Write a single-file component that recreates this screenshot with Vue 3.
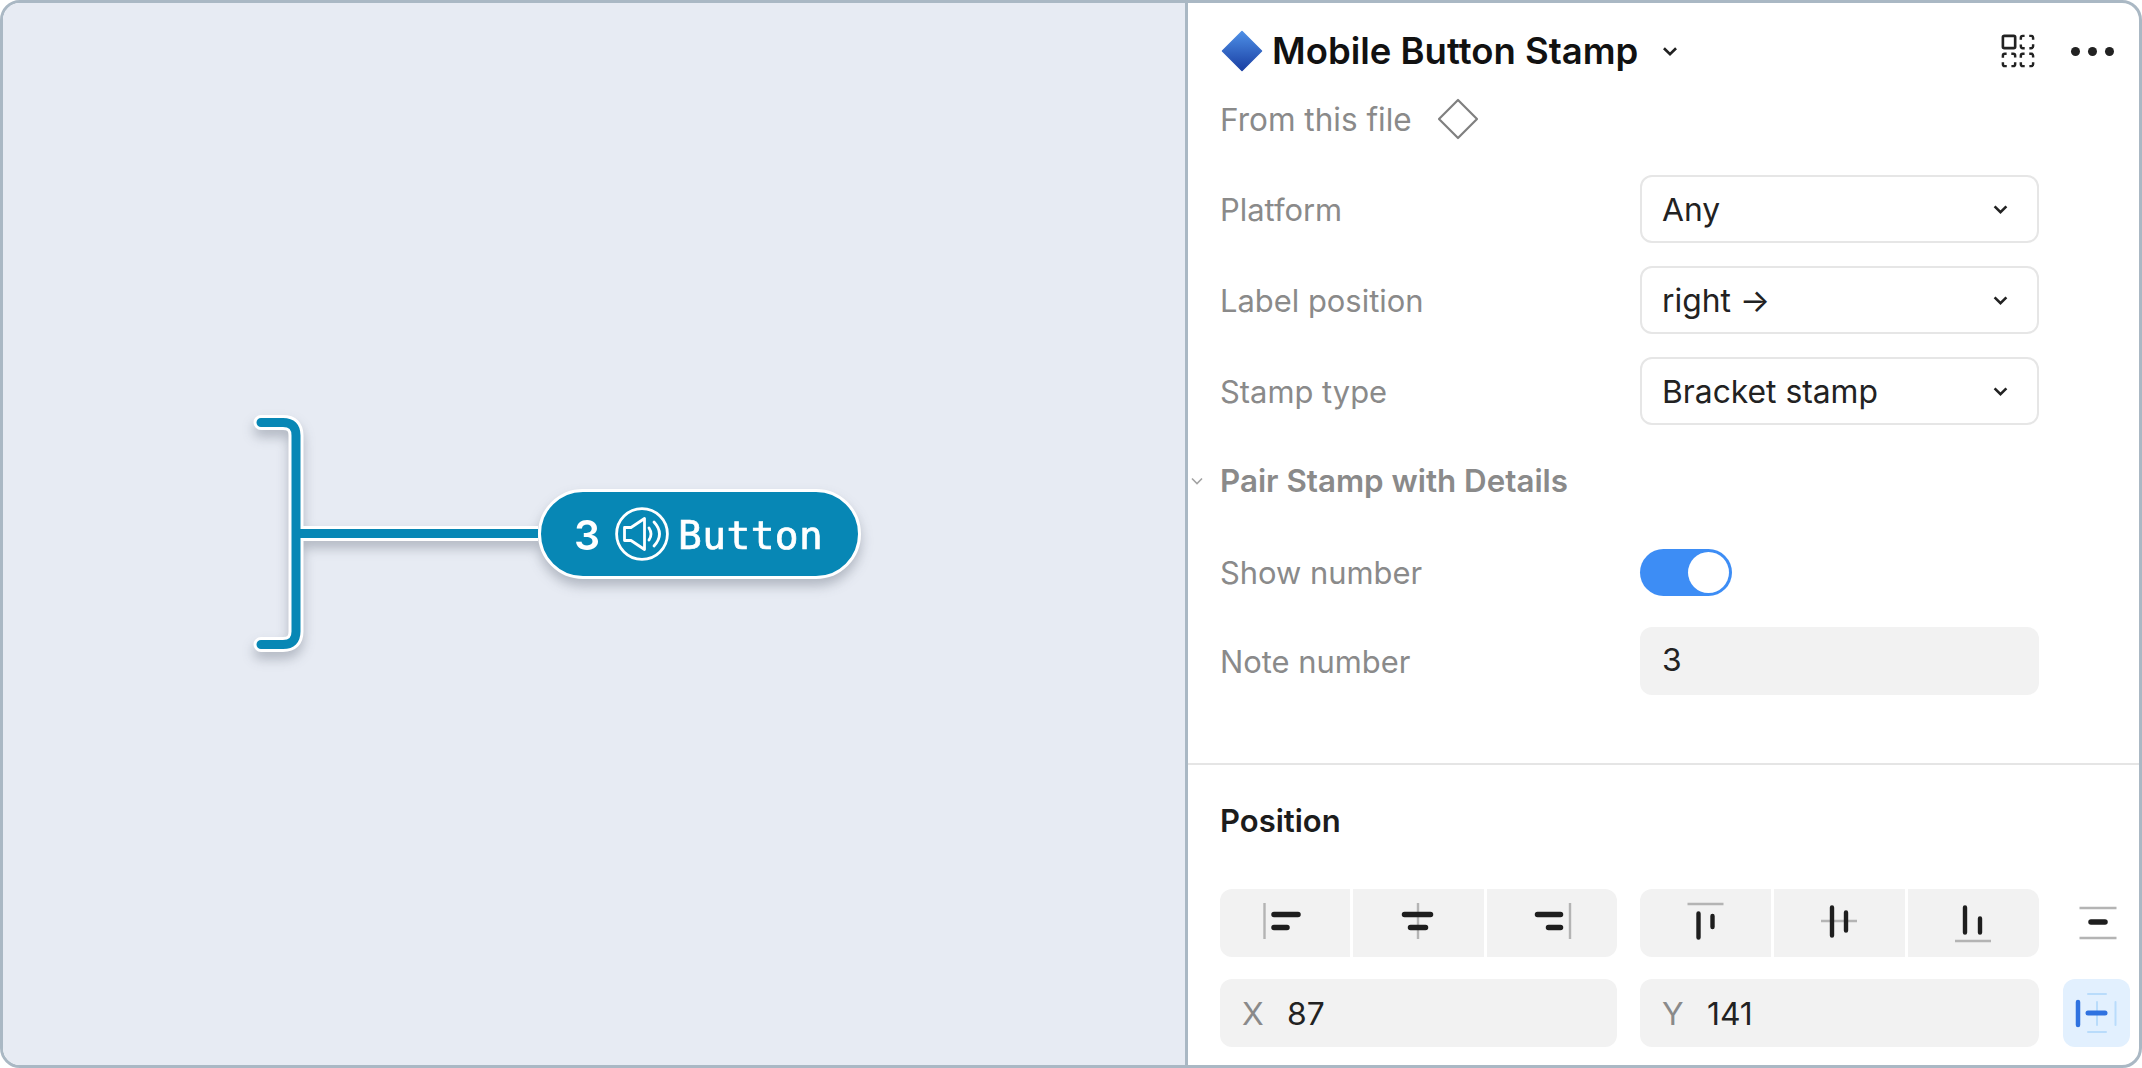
<template>
  <div class="frame">
    <div class="canvas">
      <div class="stamp">
        <svg class="bracket" width="288" height="244" viewBox="0 0 288 244" fill="none" stroke-linecap="round">
          <path class="bracket-edge" d="M11 11.5H33Q46 11.5 46 24.5V220.5Q46 233.5 33 233.5H11M46 122.5H288" />
          <path class="bracket-line" d="M11 11.5H33Q46 11.5 46 24.5V220.5Q46 233.5 33 233.5H11M46 122.5H288" />
        </svg>
        <div class="pill">
          <span class="pill-num">3</span>
          <svg class="pill-icon" width="54" height="54" viewBox="0 0 54 54" fill="none" stroke="#fff" stroke-width="2.8" stroke-linejoin="round" stroke-linecap="round">
            <circle cx="27" cy="27" r="25.4" />
            <path d="M9.5 20.5H16L29.5 11.5V42.5L16 33.5H9.5Z" />
            <path d="M34 21Q38 27 34 33" />
            <path d="M39 15Q50 27 39 39" />
          </svg>
          <span class="pill-label">Button</span>
        </div>
      </div>
    </div>

    <div class="panel">
      <div class="title-row">
        <svg class="gem" width="42" height="42" viewBox="0 0 42 42">
          <defs>
            <linearGradient id="gem-fill" x1="0" y1="0" x2="0" y2="1">
              <stop offset="0" stop-color="#4d8fe6" />
              <stop offset="1" stop-color="#1a3fa3" />
            </linearGradient>
          </defs>
          <path d="M21 1.5L40.5 21L21 40.5L1.5 21Z" fill="url(#gem-fill)" stroke="url(#gem-fill)" stroke-width="1.5" stroke-linejoin="round" />
        </svg>
        <span class="title">Mobile Button Stamp</span>
        <svg class="title-caret" width="16" height="11" viewBox="0 0 14 10" fill="none" stroke="#222" stroke-width="2.4">
          <path d="M1.5 2L7 7.5L12.5 2" />
        </svg>
        <svg class="grid-icon" width="34" height="34" viewBox="0 0 36 36" fill="none" stroke="#222">
          <rect x="2" y="2" width="13" height="13" rx="1.5" stroke-width="2.8" />
          <rect
            v-for="cell in dashedCells"
            :key="cell.id"
            :x="cell.x"
            :y="cell.y"
            width="13"
            height="13"
            rx="2"
            pathLength="48"
            stroke-width="2.6"
            stroke-dasharray="7 5"
            stroke-dashoffset="5"
          />
        </svg>
        <div class="dots"><i></i><i></i><i></i></div>
      </div>

      <div class="from-row">
        <span class="label from-label">From this file</span>
        <svg width="42" height="42" viewBox="0 0 42 42" fill="none" stroke="#7f7f7f" stroke-width="2.2" stroke-linejoin="round">
          <path d="M21 2L40 21L21 40L2 21Z" />
        </svg>
      </div>

      <div class="props">
        <div v-for="row in selects" :key="row.label" class="prop-row">
          <span class="label">{{ row.label }}</span>
          <div class="select">
            <span>{{ row.value }}</span>
            <svg width="15" height="11" viewBox="0 0 14 10" fill="none" stroke="#222" stroke-width="2.4">
              <path d="M1.5 2L7 7.5L12.5 2" />
            </svg>
          </div>
        </div>
      </div>

      <div class="sub-head">
        <svg class="sub-caret" width="14" height="10" viewBox="0 0 14 10" fill="none" stroke="#a3a3a3" stroke-width="1.6">
          <path d="M2 2.5L7 7.5L12 2.5" />
        </svg>
        <span>Pair Stamp with Details</span>
      </div>

      <div class="props props-details">
        <div class="prop-row">
          <span class="label">Show number</span>
          <div class="toggle"><i></i></div>
        </div>
        <div class="prop-row">
          <span class="label">Note number</span>
          <div class="field">3</div>
        </div>
      </div>

      <div class="divider"></div>

      <div class="pos-title">Position</div>

      <div class="tool-row">
        <div class="seg seg-left">
          <div v-for="icon in alignH" :key="icon.id" class="seg-cell">
            <svg width="44" height="44" viewBox="0 0 44 44">
              <path :d="icon.guide" class="guide" />
              <path :d="icon.bars" class="bars" />
            </svg>
          </div>
        </div>
        <div class="seg seg-right">
          <div v-for="icon in alignV" :key="icon.id" class="seg-cell">
            <svg width="44" height="44" viewBox="0 0 44 44">
              <path :d="icon.guide" class="guide" />
              <path :d="icon.bars" class="bars-thin" />
            </svg>
          </div>
        </div>
        <div class="square">
          <svg width="44" height="44" viewBox="0 0 44 44">
            <path d="M4.5 7H41.5M4.5 37H41.5" class="guide" />
            <path d="M16 21H30" class="bars" />
          </svg>
        </div>
      </div>

      <div class="tool-row coords">
        <div class="coord seg-left"><span class="coord-name">X</span><span>87</span></div>
        <div class="coord seg-right"><span class="coord-name">Y</span><span>141</span></div>
        <div class="square square-active">
          <svg width="44" height="44" viewBox="0 0 44 44" fill="none" stroke-linecap="round">
            <path d="M13 3H31M13 41H31M22 11V34M40.5 11V34" stroke="#b9dcfb" stroke-width="2" />
            <path d="M3 11V34" stroke="#2f72e0" stroke-width="4.5" />
            <path d="M13 22H30" stroke="#2f72e0" stroke-width="5" />
          </svg>
        </div>
      </div>
    </div>
  </div>
</template>

<script setup>
const selects = [
  { label: 'Platform', value: 'Any' },
  { label: 'Label position', value: 'right →' },
  { label: 'Stamp type', value: 'Bracket stamp' }
]

const dashedCells = [
  { id: 'tr', x: 21, y: 2 },
  { id: 'bl', x: 2, y: 21 },
  { id: 'br', x: 21, y: 21 }
]

const alignH = [
  { id: 'left', guide: 'M1.5 2V38', bars: 'M11 13.5H35M11 26.5H24' },
  { id: 'center', guide: 'M22 2V38', bars: 'M8.5 13.5H34.5M14.5 26.5H29.5' },
  { id: 'right', guide: 'M40 2V38', bars: 'M7.5 13.5H30.5M18.5 26.5H30.5' }
]

const alignV = [
  { id: 'top', guide: 'M3.5 3H39.5', bars: 'M14.5 12.5V36.5M28.5 15V26' },
  { id: 'middle', guide: 'M3 20H39', bars: 'M14 6.5V34.5M28 11.5V29.5' },
  { id: 'bottom', guide: 'M3 40H39', bars: 'M13 6.5V31.5M28 17.5V31.5' }
]
</script>

<style>
html,
body {
  background: #fff;
}
</style>

<style scoped>
.frame {
  box-sizing: border-box;
  width: 2142px;
  height: 1068px;
  display: flex;
  border: 3px solid #aab8c4;
  border-radius: 20px;
  overflow: hidden;
  background: #fff;
  font-family: Inter, "Liberation Sans", sans-serif;
  font-size: 31.8px;
  color: #222;
}

.canvas {
  position: relative;
  width: 1182px;
  flex: none;
  background: #e7ebf3;
  border-right: 3px solid #aab8c4;
}

.stamp {
  position: absolute;
  left: 247px;
  top: 408px;
  display: flex;
  align-items: center;
  filter: drop-shadow(0 7px 6px rgba(40, 50, 70, 0.28));
}

.bracket {
  flex: none;
}

.bracket-edge {
  stroke: #fff;
  stroke-width: 15;
}

.bracket-line {
  stroke: #0787b5;
  stroke-width: 9;
}

.pill {
  box-sizing: border-box;
  width: 323px;
  height: 90px;
  margin-top: 2px;
  display: flex;
  align-items: center;
  padding-left: 33px;
  background: #0787b5;
  border: 3px solid #fff;
  border-radius: 45px;
  color: #fff;
}

.pill-num {
  padding-top: 2px;
  font-size: 41px;
  font-weight: 600;
  line-height: 1;
}

.pill-icon {
  flex: none;
  margin-left: 15px;
}

.pill-label {
  margin-left: 9px;
  padding-top: 4px;
  font-family: "DejaVu Sans Mono", "Liberation Mono", monospace;
  font-size: 39.5px;
  letter-spacing: 0.4px;
  line-height: 1;
  -webkit-text-stroke: 0.7px #fff;
}

.panel {
  flex: 1;
  min-width: 0;
  padding-left: 32px;
}

.title-row {
  display: flex;
  align-items: center;
  height: 42px;
  margin-top: 27px;
  padding-right: 25px;
}

.gem {
  flex: none;
  margin-left: 1px;
}

.title {
  margin-left: 9px;
  font-size: 36.5px;
  font-weight: 600;
  color: #111;
  white-space: nowrap;
}

.title-caret {
  margin-left: 24px;
}

.grid-icon {
  margin-left: auto;
}

.dots {
  display: flex;
  gap: 8px;
  margin-left: 36px;
}

.dots i {
  width: 9px;
  height: 9px;
  border-radius: 50%;
  background: #222;
}

.label {
  color: #8a8a8a;
  font-size: 30.9px;
}

.from-label {
  font-size: 31.5px;
}

.from-row {
  display: flex;
  align-items: center;
  gap: 25px;
  height: 42px;
  margin-top: 26px;
}

.props {
  display: flex;
  flex-direction: column;
  gap: 23px;
  margin-top: 35px;
}

.prop-row {
  display: grid;
  grid-template-columns: 420px 399px;
  align-items: center;
  height: 68px;
}

.select {
  box-sizing: border-box;
  height: 68px;
  display: flex;
  align-items: center;
  justify-content: space-between;
  padding: 0 29px 0 20px;
  border: 2px solid #e6e6e6;
  border-radius: 12px;
}

.sub-head {
  position: relative;
  height: 40px;
  margin-top: 36px;
  display: flex;
  align-items: center;
  font-size: 31.3px;
  font-weight: 600;
  color: #8a8a8a;
}

.sub-caret {
  position: absolute;
  left: -30px;
  top: 15px;
}

.props-details {
  gap: 21px;
  margin-top: 37px;
}

.toggle {
  box-sizing: border-box;
  width: 92px;
  height: 47px;
  display: flex;
  justify-content: flex-end;
  align-items: center;
  padding-right: 3px;
  background: #3d8df5;
  border-radius: 24px;
}

.toggle i {
  width: 41px;
  height: 41px;
  border-radius: 50%;
  background: #fff;
}

.field {
  height: 68px;
  display: flex;
  align-items: center;
  padding: 0 0 4px 22px;
  box-sizing: border-box;
  background: #f2f2f2;
  border-radius: 12px;
}

.divider {
  height: 2px;
  margin: 68px 0 0 -32px;
  background: #e5e5e5;
}

.pos-title {
  margin-top: 36px;
  height: 40px;
  line-height: 40px;
  font-size: 31px;
  font-weight: 600;
  color: #1c1c1c;
}

.tool-row {
  display: flex;
  margin-top: 48px;
}

.coords {
  margin-top: 22px;
}

.seg,
.coord {
  height: 68px;
  flex: none;
  border-radius: 12px;
}

.seg {
  display: flex;
  gap: 3px;
  overflow: hidden;
}

.seg-left {
  width: 397px;
}

.seg-right {
  width: 399px;
  margin-left: 23px;
}

.seg-cell {
  flex: 1;
  display: flex;
  align-items: center;
  justify-content: center;
  background: #f2f2f2;
}

.guide {
  fill: none;
  stroke: #b4b4b4;
  stroke-width: 2.4;
}

.bars {
  fill: none;
  stroke: #1e1e1e;
  stroke-width: 5.5;
  stroke-linecap: round;
}

.bars-thin {
  fill: none;
  stroke: #1e1e1e;
  stroke-width: 4.4;
  stroke-linecap: round;
}

.square {
  box-sizing: border-box;
  width: 67px;
  height: 68px;
  flex: none;
  margin-left: 24px;
  display: flex;
  align-items: center;
  justify-content: center;
  border-radius: 12px;
}

.square-active {
  background: #e2f0fe;
}

.coord {
  box-sizing: border-box;
  display: flex;
  align-items: center;
  background: #f2f2f2;
  padding-left: 22px;
}

.coord-name {
  width: 45px;
  color: #8a8a8a;
}
</style>
